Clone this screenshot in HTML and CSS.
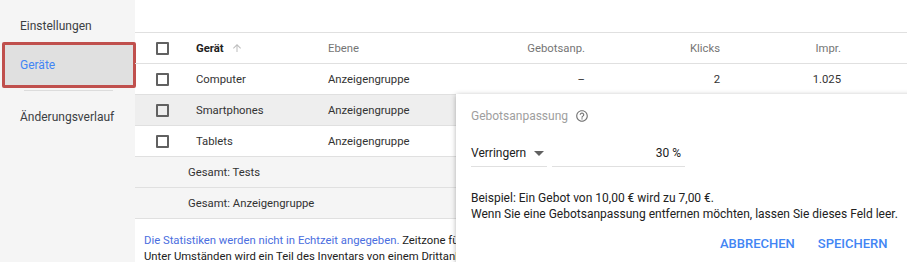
FILE: index.html
```html
<!DOCTYPE html>
<html lang="de">
<head>
<meta charset="utf-8">
<link rel="stylesheet" href="styles.css">
</head>
<body>
<div class="page">
  <nav class="side">
    <div class="nav-item">Einstellungen</div>
    <div class="nav-item selected">Geräte</div>
    <div class="nav-divider"></div>
    <div class="nav-item">Änderungsverlauf</div>
  </nav>
  <main class="main">
    <div class="table">
      <div class="row head">
        <div class="c-cb"><span class="cb"></span></div>
        <div class="c-dev"><b>Gerät</b>
          <svg class="sort" width="12" height="12" viewBox="0 0 24 24"><path d="M4 12l1.41 1.41L11 7.830V20h2V7.83l5.58 5.59L20 12l-8-8-8 8z" fill="#bdbdbd"/></svg>
        </div>
        <div class="c-lvl">Ebene</div>
        <div class="c-bid">Gebotsanp.</div>
        <div class="c-clk">Klicks</div>
        <div class="c-imp">Impr.</div>
      </div>
      <div class="row">
        <div class="c-cb"><span class="cb"></span></div>
        <div class="c-dev">Computer</div>
        <div class="c-lvl">Anzeigengruppe</div>
        <div class="c-bid">–</div>
        <div class="c-clk">2</div>
        <div class="c-imp">1.025</div>
      </div>
      <div class="row hover">
        <div class="c-cb"><span class="cb"></span></div>
        <div class="c-dev">Smartphones</div>
        <div class="c-lvl">Anzeigengruppe</div>
      </div>
      <div class="row">
        <div class="c-cb"><span class="cb"></span></div>
        <div class="c-dev">Tablets</div>
        <div class="c-lvl">Anzeigengruppe</div>
      </div>
      <div class="row total"><div class="c-total">Gesamt: Tests</div></div>
      <div class="row total"><div class="c-total">Gesamt: Anzeigengruppe</div></div>
    </div>
    <p class="foot"><span class="link">Die Statistiken werden nicht in Echtzeit angegeben.</span> Zeitzone für alle Datums- und Uhrzeitangaben: (GMT+01:00) Mitteleuropäische Zeit.<br>Unter Umständen wird ein Teil des Inventars von einem Drittanbieter bereitgestellt.<br>Für Verbindungen, Messungen und sonstige Vermittlungsleistungen gelten die Bedingungen.</p>
  </main>
  <div class="popup">
    <div class="pop-title">Gebotsanpassung
      <svg class="help" width="14" height="14" viewBox="0 0 24 24"><path fill="#757575" d="M11 18h2v-2h-2v2zm1-16C6.48 2 2 6.48 2 12s4.480 10 10 10 10-4.48 10-10S17.52 2 12 2zm0 18c-4.41 0-8-3.59-8-8s3.59-8 8-8 8 3.59 8 8-3.59 8-8 8zm0-14c-2.21 0-4 1.79-4 4h2c0-1.1.9-2 2-2s2 .9 2 2c0 2-3 1.75-3 5h2c0-2.25 3-2.5 3-5 0-2.21-1.79-4-4-4z"/></svg>
    </div>
    <div class="pop-fields">
      <div class="select">Verringern <span class="caret"></span></div>
      <div class="input">30 %</div>
    </div>
    <div class="pop-text">Beispiel: Ein Gebot von 10,00 € wird zu 7,00 €.<br>Wenn Sie eine Gebotsanpassung entfernen möchten, lassen Sie dieses Feld leer.</div>
    <div class="pop-actions">
      <span class="btn">ABBRECHEN</span>
      <span class="btn">SPEICHERN</span>
    </div>
  </div>
</div>
</body>
</html>
```
FILE: styles.css
```css
html, body {
  margin: 0;
  padding: 0;
  width: 907px;
  height: 262px;
  overflow: hidden;
  background: #fff;
  font-family: Roboto, "Liberation Sans", sans-serif;
  font-size: 12px;
  color: #333;
}
.page {
  position: relative;
  display: flex;
  height: 262px;
  overflow: hidden;
}
.side {
  width: 135px;
  flex: none;
  background: #f5f5f5;
  padding-top: 10px;
  box-sizing: border-box;
  font-size: 12px;
}
.nav-item {
  height: 32px;
  line-height: 32px;
  padding-left: 20px;
  color: #3c4043;
}
.nav-item.selected {
  margin: 0 -1px 0 2px;
  height: 40px;
  line-height: 40px;
  padding-left: 15px;
  background: #e0e0e0;
  color: #4285f4;
  border: 3px solid #c0504d;
  border-radius: 2px;
  box-sizing: content-box;
}
.nav-divider {
  height: 1px;
  background: #dcdcdc;
  margin: 2px 22px 10px 24px;
}
.main {
  flex: 1;
  padding-top: 32px;
  font-size: 11.3px;
  min-width: 0;
}
.table {
  border-top: 1px solid #e0e0e0;
}
.row {
  display: flex;
  align-items: center;
  height: 30px;
  border-bottom: 1px solid #e0e0e0;
}
.row.hover { background: #eeeeee; }
.row.total { background: #f5f5f5; }
.head { color: #757575; }
.head b { color: #212121; font-weight: 700; }
.c-cb { width: 20px; padding-left: 21px; padding-right: 20px; display: flex; }
.cb {
  width: 9px;
  height: 9px;
  border: 2px solid #616161;
  border-radius: 1px;
}
.c-dev { width: 132px; display: flex; align-items: center; }
.sort { margin-left: 7px; }
.c-lvl { width: 120px; }
.c-bid { width: 137px; text-align: right; }
.c-clk { width: 135px; text-align: right; }
.c-imp { width: 121px; text-align: right; }
.c-total { padding-left: 53px; }
.foot {
  margin: 0;
  padding: 14px 0 0 9px;
  font-size: 11.3px;
  line-height: 16px;
  color: #212121;
  white-space: nowrap;
}
.link { color: #4a6ee0; }
.popup {
  position: absolute;
  left: 456px;
  top: 94px;
  width: 470px;
  height: 190px;
  background: #fff;
  box-shadow: 0 1px 5px rgba(0,0,0,0.3);
  padding: 14px 0 0 15px;
  box-sizing: border-box;
  font-size: 12px;
}
.pop-title {
  color: #9e9e9e;
  display: flex;
  align-items: center;
  height: 16px;
}
.help { margin-left: 7px; }
.pop-fields {
  display: flex;
  gap: 5px;
  margin-top: 16px;
}
.select, .input {
  height: 26px;
  line-height: 26px;
  border-bottom: 1px solid #e0e0e0;
  color: #212121;
}
.select {
  width: 76px;
  display: flex;
  align-items: center;
}
.caret {
  margin-left: 8px;
  width: 0;
  height: 0;
  border-left: 5px solid transparent;
  border-right: 5px solid transparent;
  border-top: 5px solid #616161;
}
.input {
  width: 129px;
  padding-right: 4px;
  text-align: right;
}
.pop-text {
  margin-top: 23px;
  line-height: 16px;
  color: #212121;
}
.pop-actions {
  display: flex;
  gap: 23px;
  margin-top: 14px;
  padding-left: 249px;
}
.btn {
  color: #4285f4;
  font-weight: 500;
  font-size: 13px;
  line-height: 16px;
}
```
